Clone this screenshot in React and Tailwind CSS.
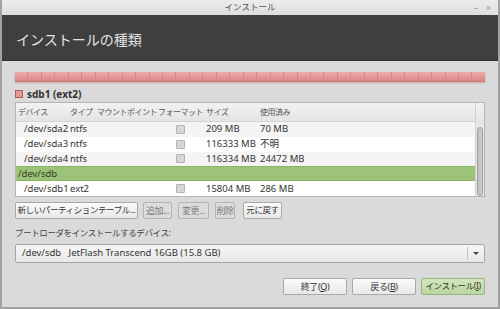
const rows = [
  { dev: "/dev/sda2", type: "ntfs", size: "209 MB", used: "70 MB", bg: "bg-[#f4f4f4]" },
  { dev: "/dev/sda3", type: "ntfs", size: "116333 MB", used: "不明", bg: "bg-white" },
  { dev: "/dev/sda4", type: "ntfs", size: "116334 MB", used: "24472 MB", bg: "bg-[#f4f4f4]" },
];

const font = { fontFamily: '"Noto Sans", "Noto Sans CJK JP", sans-serif' };

const Check = () => (
  <div className="w-[9px] h-[9px] bg-[#d6d6d6] border border-[#b4b4b4] rounded-[1px]" />
);

const Row = ({ dev, type, size, used, bg }) => (
  <div className={`h-[15px] flex items-center text-[9.5px] text-[#333] whitespace-nowrap ${bg}`}>
    <span className="w-[54px] shrink-0 pl-[8px]">{dev}</span>
    <span className="w-[90px] shrink-0">{type}</span>
    <span className="w-[46px] shrink-0 pl-[16px]">
      <Check />
    </span>
    <span className="w-[54px] shrink-0">{size}</span>
    <span className="shrink-0">{used}</span>
  </div>
);

const Btn = ({ children, disabled, className = "" }) => (
  <div
    className={`h-[17px] flex items-center justify-center border rounded-[2px] text-[8.5px] tracking-[-0.4px] whitespace-nowrap shrink-0 ${
      disabled
        ? "border-[#b4b4b4] bg-[#dcdcdc] text-[#7a7a7a]"
        : "border-[#a8a8a8] bg-gradient-to-b from-[#fafafa] to-[#e8e8e8] text-[#333]"
    } ${className}`}
  >
    {children}
  </div>
);

export default function App() {
  return (
    <div
      style={font}
      className="w-[500px] h-[309px] bg-[#dadada] border-x-2 border-b-2 border-[#a2a2a2] flex flex-col overflow-hidden"
    >
      {/* title bar */}
      <div className="h-[15px] bg-gradient-to-b from-[#ececec] to-[#dedede] flex items-center relative">
        <span className="mx-auto text-[8.5px] text-[#555]">インストール</span>
        <span className="absolute right-[20px] top-[1px] text-[9px] text-[#999]">–</span>
        <span className="absolute right-[7px] top-[1px] text-[9px] text-[#999]">×</span>
      </div>

      {/* header */}
      <div className="h-[46px] bg-[#3f3f3f] border-b border-[#2e2e2e] flex items-center pl-[14px]">
        <span className="text-[14px] text-[#e4e4e4] pt-[4px]">インストールの種類</span>
      </div>

      <div className="flex-1 flex flex-col px-[13px]">
        {/* partition bar */}
        <div className="mt-[11px] h-[10px] flex bg-gradient-to-b from-[#efaaaa] to-[#d98888] border-b border-[#c07a7a] shadow-[0_1px_2px_rgba(160,60,60,0.3)]">
          {Array.from({ length: 35 }).map((_, i) => (
            <div key={i} className="flex-1 border-r border-[#d08a8a] last:border-r-0" />
          ))}
        </div>

        {/* legend */}
        <div className="mt-[6px] h-[12px] flex items-center gap-[4px]">
          <div className="w-[8px] h-[8px] bg-[#e89898] border border-[#a85e5e]" />
          <span className="text-[10px] font-bold text-[#333]">sdb1 (ext2)</span>
        </div>

        {/* table */}
        <div className="mt-[2px] h-[95px] border border-[#b4b4b4] flex bg-white overflow-hidden">
          <div className="flex-1 flex flex-col min-w-0">
            <div className="h-[19px] shrink-0 bg-gradient-to-b from-[#f2f2f2] to-[#e4e4e4] border-b border-[#d4d4d4] flex items-center text-[8px] tracking-[-0.5px] text-[#555] whitespace-nowrap">
              <span className="w-[54px] shrink-0 pl-[2px]">デバイス</span>
              <span className="w-[27px] shrink-0">タイプ</span>
              <span className="w-[61px] shrink-0">マウントポイント</span>
              <span className="w-[48px] shrink-0">フォーマット</span>
              <span className="w-[54px] shrink-0">サイズ</span>
              <span className="shrink-0">使用済み</span>
            </div>
            {rows.map((r) => (
              <Row key={r.dev} {...r} />
            ))}
            <div className="h-[15px] shrink-0 flex items-center bg-[#9dc378] border-y border-[#8ab564] text-[9.5px] text-[#2f3a26] pl-[2px]">
              /dev/sdb
            </div>
            <Row dev="/dev/sdb1" type="ext2" size="15804 MB" used="286 MB" bg="bg-white" />
          </div>
          <div className="w-[9px] shrink-0 bg-[#e6e6e6] border-l border-[#d0d0d0] flex flex-col">
            <div className="h-[19px] bg-gradient-to-b from-[#f2f2f2] to-[#e4e4e4]" />
            <div className="mt-[5px] ml-[1px] w-[6px] flex-1 rounded-[3px] bg-gradient-to-r from-[#bdbdbd] to-[#cfcfcf] border border-[#a0a0a0]" />
          </div>
        </div>

        {/* buttons */}
        <div className="mt-[5px] flex">
          <Btn className="w-[123px]">新しいパーティションテーブル...</Btn>
          <Btn disabled className="w-[29px] ml-[5px] text-[9px]">追加...</Btn>
          <Btn disabled className="w-[31px] ml-[6px] text-[9px]">変更...</Btn>
          <Btn disabled className="w-[20px] ml-[6px] text-[9px]">削除</Btn>
          <Btn className="w-[39px] ml-[8px]">元に戻す</Btn>
        </div>

        <div className="mt-[8px] text-[8.5px] tracking-[-0.4px] text-[#444] whitespace-nowrap">
          ブートローダをインストールするデバイス:
        </div>

        {/* combo */}
        <div className="mt-[4px] h-[19px] border border-[#a6a6a6] rounded-[2px] bg-gradient-to-b from-[#f6f6f6] to-[#e8e8e8] flex items-center">
          <span className="flex-1 pl-[6px] text-[9.5px] text-[#333] whitespace-pre">
            /dev/sdb   JetFlash Transcend 16GB (15.8 GB)
          </span>
          <div className="w-[17px] h-[13px] border-l border-[#c4c4c4] flex items-center justify-center">
            <div className="w-0 h-0 border-l-[3px] border-r-[3px] border-t-[3px] border-l-transparent border-r-transparent border-t-[#444]" />
          </div>
        </div>

        {/* bottom buttons */}
        <div className="mt-[15px] flex justify-end gap-[5px]">
          <Btn className="w-[64px] text-[9px]">
            終了(<u>Q</u>)
          </Btn>
          <Btn className="w-[64px] text-[9px]">
            戻る(<u>B</u>)
          </Btn>
          <div className="w-[64px] h-[17px] flex items-center justify-center border border-[#98b482] rounded-[2px] bg-gradient-to-b from-[#d2e6bb] to-[#bcd6a0] text-[8.5px] tracking-[-0.4px] text-[#333] whitespace-nowrap">
            インストール(<u>I</u>)
          </div>
        </div>
      </div>
    </div>
  );
}
